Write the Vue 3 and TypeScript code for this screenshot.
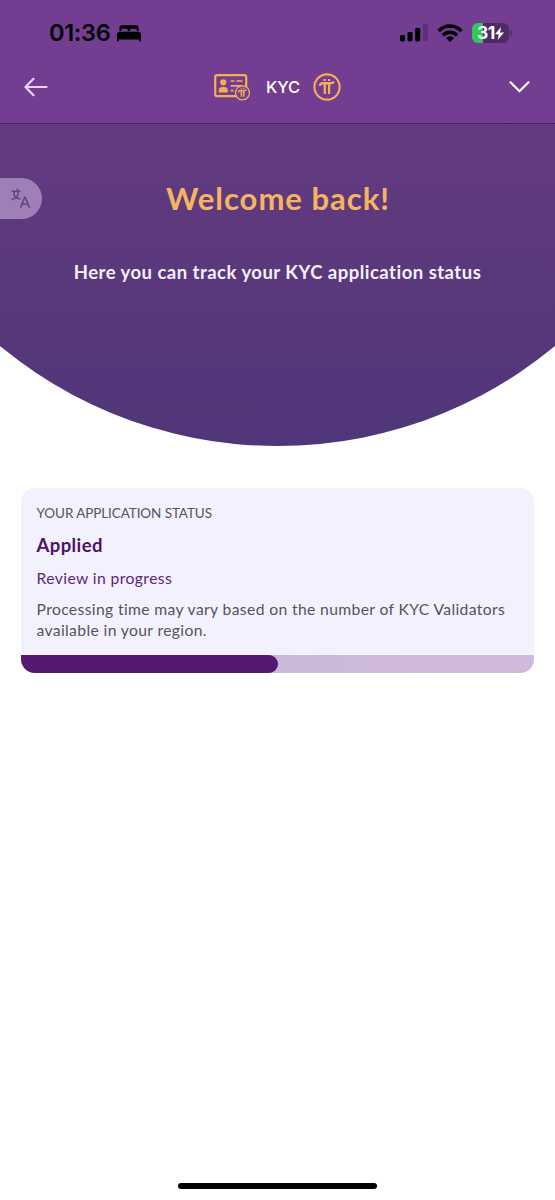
<script setup lang="ts">
interface ApplicationStatus {
  label: string
  state: string
  stage: string
  note: string
  progress: number
}

const application: ApplicationStatus = {
  label: 'YOUR APPLICATION STATUS',
  state: 'Applied',
  stage: 'Review in progress',
  note: 'Processing time may vary based on the number of KYC Validators available in your region.',
  progress: 50,
}
</script>

<template>
  <div class="screen">
    <header class="top">
      <div class="status-bar">
        <div class="clock">
          <span class="time">01:36</span>
          <svg class="bed" width="24" height="17" viewBox="0 0 24 17">
            <path d="M2.4 6V2.8Q2.4.3 4.900.3H19.100Q21.600.3 21.600 2.800V6H19.700V4.800Q19.700 3.700 18.600 3.700H14.400Q13.200 3.700 13.200 4.900V6H10.800V4.900Q10.800 3.700 9.600 3.700H5.400Q4.300 3.700 4.300 4.800V6Z" />
            <path d="M3 6.800H21Q24 6.800 24 9.800V15.600Q24 16.600 23.100 16.600T22.200 15.600V14.400H1.800V15.600Q1.800 16.600.9 16.600T0 15.600V9.800Q0 6.800 3 6.800Z" />
          </svg>
        </div>
        <div class="indicators">
          <svg width="29" height="18" viewBox="0 0 29 18">
            <rect x="0" y="11" width="5" height="6.500" rx="1.400" />
            <rect x="7.500" y="8" width="5" height="9.500" rx="1.400" />
            <rect x="15.200" y="4" width="5" height="13.500" rx="1.400" />
            <rect x="23" y="0" width="5" height="17.500" rx="1.400" fill="#592f79" />
          </svg>
          <svg class="wifi" width="26" height="19" viewBox="0 0 26 19">
            <g fill="none" stroke="#000" stroke-width="3.500">
              <path d="M1.600 7.100Q6.600 2.100 13 2.100T24.400 7.100" />
              <path d="M5.800 11.200Q9 8.200 13 8.200T20.200 11.200" />
            </g>
            <path d="M8.900 14.100Q13 10.600 17.100 14.100L13.600 17.600Q13 18.200 12.400 17.600Z" />
          </svg>
          <div class="battery">
            <span>31</span>
            <svg width="9" height="13" viewBox="0 0 9 13"><path d="M6 0L0 7.200H3.700L2.700 13L9 5.400H5.200Z" fill="#fff" /></svg>
          </div>
          <i class="battery-tip"></i>
        </div>
      </div>
      <nav class="nav">
        <svg class="back" width="24" height="20" viewBox="0 0 24 20" fill="none" stroke="#ead5f2" stroke-width="2.200" stroke-linecap="round" stroke-linejoin="round">
          <path d="M22.500 10H2M9.500 1.800L1.500 10L9.500 18.200" />
        </svg>
        <div class="brand">
          <svg width="37" height="27" viewBox="0 0 37 27">
            <rect x="1.200" y="1.200" width="31" height="21" rx="2" fill="none" stroke="#f5ae54" stroke-width="2.200" />
            <circle cx="9.300" cy="8.300" r="3.100" fill="#f5ae54" />
            <path d="M4.800 18.500V16.700Q4.800 13 8.200 13H10.400Q13.800 13 13.800 16.700V18.500Z" fill="#f5ae54" />
            <path d="M16.700 7H20.500M22.500 7H28.500M16.700 11.800H28.500M16.700 16.600H19.500" stroke="#f5ae54" stroke-width="1.700" />
            <circle cx="28.500" cy="18.800" r="7" fill="#733d92" stroke="#f5ae54" stroke-width="1.300" />
            <path d="M24.400 18.300Q24.600 16.500 26.200 16.600L30.400 16.600Q31.800 16.600 32.500 15.600M27.400 17V22.800M29.800 17V22.800M27.400 14.800V13.800M29.800 14.800V13.800" fill="none" stroke="#f5ae54" stroke-width="1.500" />
          </svg>
          <span class="brand-name">KYC</span>
          <svg width="28" height="28" viewBox="0 0 28 28" fill="none" stroke="#f5ae54">
            <circle cx="14" cy="14" r="12.600" stroke-width="2.100" />
            <path d="M6.900 12.900Q7.200 10 9.700 10.300L17.400 10.300Q20 10.400 20.700 8.500" stroke-width="2.400" />
            <path d="M11.800 11V20.900M16.100 11V20.900M11.600 8.100V5.900M16.100 8.100V5.900" stroke-width="2.300" />
          </svg>
        </div>
        <svg class="expand" width="22" height="14" viewBox="0 0 22 14" fill="none" stroke="#fff" stroke-width="2.200" stroke-linecap="round" stroke-linejoin="round">
          <path d="M1.500 2.300L10.500 11.300L19.500 2.300" />
        </svg>
      </nav>
    </header>

    <section class="hero">
      <h1>Welcome back!</h1>
      <p>Here you can track your KYC application status</p>
      <button class="translate" aria-label="Translate">
        <svg width="20" height="21" viewBox="0 0 20 21" fill="none" stroke="#67428c" stroke-width="1.600">
          <path d="M.5 3.300H9.500M6.500.3V3.300M3.200 3.500V6.300Q3.200 9 5.800 9.900L9.300 11M7.600 3.500Q7.300 10.600.5 11.500" />
          <path d="M9.500 19.700L13.800 9.300H14.200L18.500 19.700M10.900 16.200H17.100" />
        </svg>
      </button>
    </section>

    <main class="content">
      <article class="card">
        <div class="card-body">
          <div class="label">{{ application.label }}</div>
          <h2>{{ application.state }}</h2>
          <div class="stage">{{ application.stage }}</div>
          <p class="note">{{ application.note }}</p>
        </div>
        <div class="track">
          <div class="fill" :style="{ width: application.progress + '%' }"></div>
        </div>
      </article>
    </main>
    <div class="home-indicator"></div>
  </div>
</template>

<style>
body {
  margin: 0;
  background: #fff;
}
</style>

<style scoped>
* {
  box-sizing: border-box;
}
.screen {
  display: flex;
  flex-direction: column;
  height: 1200px;
  background: #fff;
  font-family: Lato, "Open Sans", sans-serif;
}
.top {
  height: 124px;
  background: #733d92;
  border-bottom: 1px solid #4c1e5c;
}
.status-bar {
  display: flex;
  justify-content: space-between;
  align-items: center;
  height: 66px;
  padding: 0 43px 0 49px;
}
.clock {
  display: flex;
  align-items: center;
  gap: 7px;
}
.time {
  font: 600 23.5px/28px Inter, sans-serif;
  letter-spacing: -0.3px;
}
.indicators {
  display: flex;
  align-items: center;
}
.wifi {
  margin-left: 8.5px;
}
.battery {
  display: flex;
  align-items: center;
  justify-content: center;
  width: 37px;
  height: 20px;
  margin-left: 9px;
  border-radius: 6px;
  background: linear-gradient(90deg, #34c759 0 11.500px, #4d2b66 11.500px);
  color: #fff;
  font: 700 17.5px/20px Inter, sans-serif;
  letter-spacing: -0.3px;
}
.battery-tip {
  width: 2px;
  height: 6px;
  margin-left: 1px;
  border-radius: 0 3px 3px 0;
  background: #56306f;
}
.nav {
  display: grid;
  grid-template-columns: 1fr auto 1fr;
  align-items: center;
  height: 42px;
  padding: 0 24px;
}
.brand {
  display: flex;
  align-items: center;
}
.brand-name {
  margin: 0 13px 0 15px;
  color: #fff;
  font: 500 16.5px/20px Inter, sans-serif;
  letter-spacing: -0.1px;
}
.expand {
  justify-self: end;
}
.hero {
  position: relative;
  height: 322px;
  padding-top: 53px;
  background: linear-gradient(#643a80, #4f3678);
  clip-path: circle(435px at 50% -113px);
  text-align: center;
}
h1 {
  margin: 0;
  padding-left: 1px;
  color: #f5b45f;
  font-size: 31px;
  font-weight: 700;
  line-height: 42px;
  letter-spacing: 1px;
}
.hero p {
  margin: 41px 0 0;
  color: #f8effc;
  font-size: 18.5px;
  font-weight: 700;
  line-height: 24px;
  letter-spacing: 0.48px;
}
.translate {
  position: absolute;
  top: 54px;
  left: 0;
  display: flex;
  align-items: center;
  justify-content: flex-end;
  width: 42px;
  height: 41px;
  padding: 0 11px 0 0;
  border: 0;
  border-radius: 0 21px 21px 0;
  background: #9f80b6;
}
.content {
  flex: 1;
  padding: 42px 21px 0;
}
.card {
  overflow: hidden;
  border-radius: 14px;
  background: #f3f1fe;
}
.card-body {
  height: 167px;
  padding: 17px 15.5px 0;
  color: #55535f;
}
.label {
  font-size: 13.5px;
  line-height: 17px;
  letter-spacing: -0.09px;
}
h2 {
  margin: 11px 0 0;
  color: #4c1465;
  font-size: 18.5px;
  font-weight: 700;
  line-height: 24px;
  letter-spacing: 0.4px;
}
.stage {
  margin-top: 10px;
  color: #5c2775;
  font-size: 15.7px;
  line-height: 22px;
  letter-spacing: 0.4px;
}
.note {
  margin: 10px 0 0;
  font-size: 15.7px;
  line-height: 21px;
  letter-spacing: 0.36px;
}
.track {
  height: 18px;
  background: linear-gradient(100deg, #c9bad9 45%, #d1b9db 80%);
}
.fill {
  height: 100%;
  border-radius: 0 9px 9px 0;
  background: #55196f;
}
.home-indicator {
  align-self: center;
  width: 199px;
  height: 6px;
  margin-bottom: 11px;
  border-radius: 3px;
  background: #000;
}
</style>
